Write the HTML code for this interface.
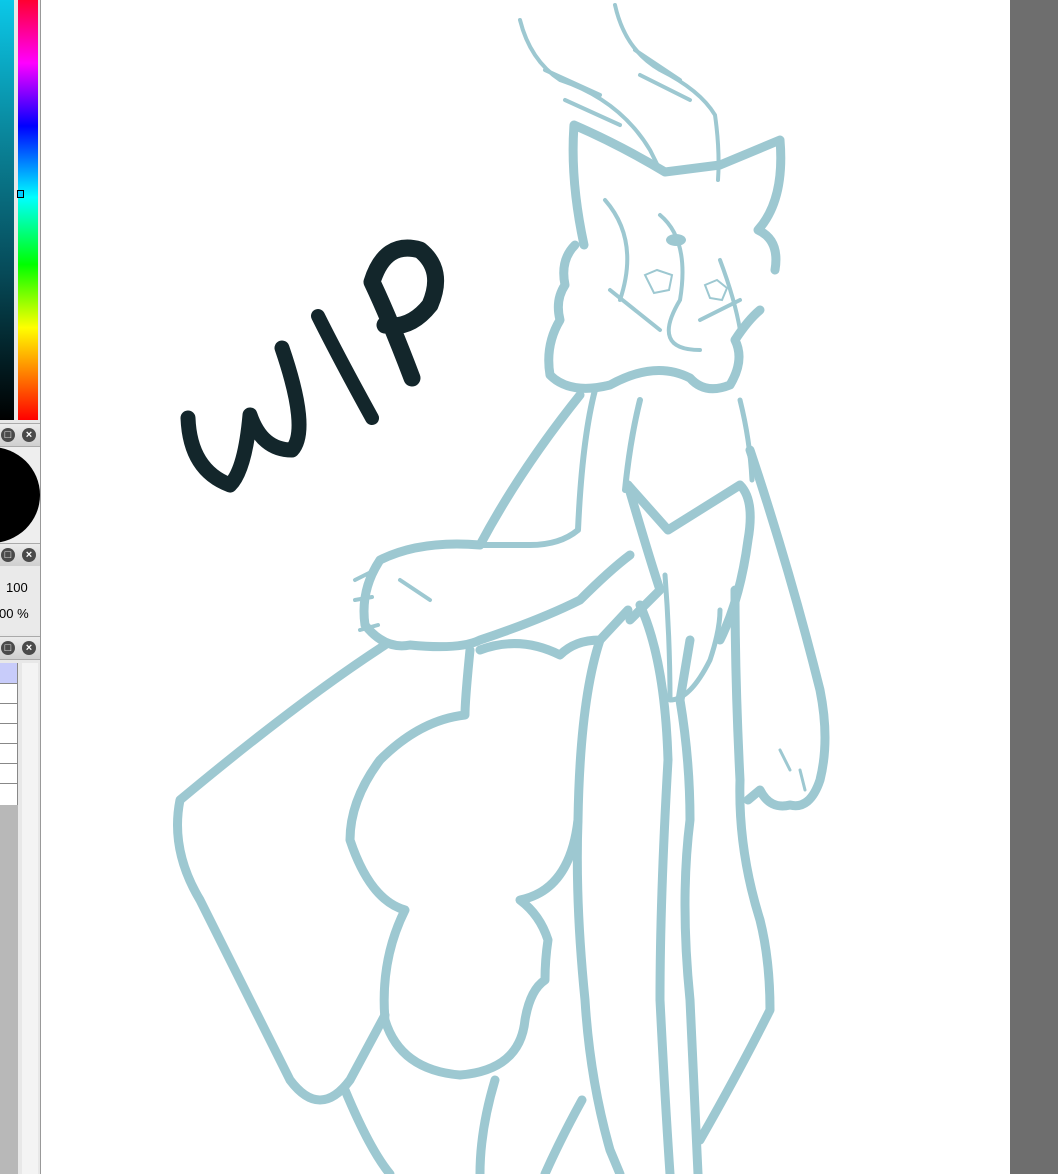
<!DOCTYPE html>
<html><head><style>
html,body{margin:0;padding:0;width:1058px;height:1174px;overflow:hidden;background:#fff;font-family:"Liberation Sans",sans-serif}
.p{position:absolute}
.hdr{position:absolute;left:0;width:40px;height:22px;background:linear-gradient(#ececec,#cfcfcf);border-top:1px solid #aaa;border-bottom:1px solid #aaa}
.ic{position:absolute;top:4px;width:14px;height:14px;border-radius:50%;background:#4a4a4a;color:#fff;font-size:11px;line-height:14px;text-align:center;font-weight:bold}
</style></head><body>
<div class="p" style="left:0;top:0;width:40px;height:1174px;background:#e8e8e8;border-right:1px solid #999"></div>
<div class="p" style="left:0;top:0;width:14px;height:420px;background:linear-gradient(#0bc8e8,#0a8aa0 30%,#064a58 65%,#000)"></div>
<div class="p" style="left:18px;top:0;width:20px;height:420px;background:linear-gradient(#ff0030,#ff00ff 15%,#0000ff 30%,#00ffff 47%,#00ff00 63%,#ffff00 78%,#ff0000)"></div>
<div class="p" style="left:17px;top:190px;width:5px;height:6px;border:1px solid #000;background:#0cf"></div>
<div class="hdr" style="top:423px"><div class="ic" style="left:1px">□</div><div class="ic" style="left:22px">×</div></div>
<div class="p" style="left:0;top:447px;width:40px;height:96px;background:#eee;overflow:hidden"><div style="position:absolute;left:-58px;top:0;width:98px;height:96px;border-radius:50%;background:#000"></div></div>
<div class="hdr" style="top:543px"><div class="ic" style="left:1px">□</div><div class="ic" style="left:22px">×</div></div>
<div class="p" style="left:0;top:566px;width:40px;height:68px;background:#eaeaea;font-size:13px">
<div class="p" style="left:6px;top:14px">100</div><div class="p" style="left:-1px;top:40px">00 %</div></div>
<div class="hdr" style="top:636px"><div class="ic" style="left:1px">□</div><div class="ic" style="left:22px">×</div></div>
<div class="p" style="left:0;top:663px;width:17px;height:142px;background:#fff;border-right:1px solid #888">
<div style="height:20px;background:#c8ccfa;border-bottom:1px solid #888"></div>
<div style="height:19px;border-bottom:1px solid #888"></div><div style="height:19px;border-bottom:1px solid #888"></div><div style="height:19px;border-bottom:1px solid #888"></div><div style="height:19px;border-bottom:1px solid #888"></div><div style="height:19px;border-bottom:1px solid #888"></div></div>
<div class="p" style="left:0;top:805px;width:18px;height:369px;background:#b8b8b8"></div>
<div class="p" style="left:22px;top:663px;width:16px;height:511px;background:#f4f4f4"></div>
<div class="p" style="left:1010px;top:0;width:48px;height:1174px;background:#6e6e6e"></div>
<svg class="p" style="left:0;top:0" width="1010" height="1174" viewBox="0 0 1010 1174">
<g fill="none" stroke="#13262b" stroke-linecap="round" stroke-linejoin="round">
<path d="M188 418 Q190 470 230 485 Q245 470 250 415 Q262 450 292 450 Q310 430 282 348" stroke-width="15"/>
<path d="M318 316 Q340 360 372 418" stroke-width="14"/>
<path d="M412 378 Q390 320 372 282 Q385 240 420 250 Q445 270 430 305 Q410 330 385 325" stroke-width="17"/>
</g>
<g fill="none" stroke="#9dc8d1" stroke-linecap="round" stroke-linejoin="round" stroke-width="9">
<path d="M584 245 Q570 180 574 125 Q620 145 665 172 L720 165 L780 140 Q785 200 758 230 Q780 240 775 270"/>
<path d="M575 245 Q560 260 565 285 Q555 300 560 320 Q545 345 550 375 Q570 395 610 385 Q655 360 690 378 Q705 395 730 385 Q745 360 735 340 Q748 320 760 310"/>
<path d="M580 395 Q520 470 480 545 Q420 540 380 560 Q360 590 365 625 Q385 650 410 645 Q460 650 480 640 Q540 620 580 600 Q610 570 630 555"/>
<path d="M385 645 Q300 700 180 800 Q170 850 200 900 Q260 1020 290 1080 Q320 1120 350 1080 L385 1015"/>
<path d="M470 650 Q465 700 465 715 Q420 720 380 760 Q350 800 350 840 Q370 900 405 910 Q380 960 385 1020 Q400 1070 460 1075 Q520 1070 525 1020 Q530 990 545 980 Q545 960 548 940 Q540 915 520 900 Q570 890 578 820"/>
<path d="M480 650 Q520 635 560 655 Q575 640 600 640 L628 610"/>
<path d="M345 1090 Q370 1150 390 1174"/>
<path d="M495 1080 Q480 1130 480 1174"/>
<path d="M582 1100 Q560 1140 545 1174"/>
<path d="M628 485 L668 530 L740 485 Q755 500 748 540 Q740 600 720 640"/>
<path d="M628 485 Q650 560 660 590 Q640 610 630 620"/>
<path d="M600 640 Q580 700 578 820 Q575 900 585 1000 Q590 1080 610 1150 L620 1174"/>
<path d="M640 605 Q665 660 668 760 Q660 900 660 1000 Q665 1100 670 1174"/>
<path d="M690 640 L680 700 Q690 760 690 820 Q680 900 690 1000 L698 1174"/>
<path d="M735 590 Q735 680 740 780 Q738 850 760 920 Q770 960 770 1010 Q740 1070 700 1140"/>
<path d="M750 450 Q790 570 820 690 Q830 740 820 780 Q810 810 790 805 Q770 810 760 790 L748 800"/>
<path d="M595 390 Q582 440 578 530 Q560 545 530 545 L480 545" stroke-width="6"/>
<path d="M640 400 Q630 440 625 490" stroke-width="6"/>
<path d="M740 400 Q750 440 752 480" stroke-width="5"/>
<path d="M665 575 Q670 640 670 700 Q690 700 710 660 Q720 630 720 610" stroke-width="5"/>
</g>
<g fill="none" stroke="#9dc8d1" stroke-linecap="round" stroke-width="4">
<path d="M520 20 Q530 60 560 80 Q620 100 650 150 L660 170"/>
<path d="M615 5 Q625 50 660 70 Q700 90 715 115 Q720 150 718 180"/>
<path d="M545 70 L600 95 M565 100 L620 125 M635 50 L680 80 M640 75 L690 100"/>
<path d="M605 200 Q640 240 620 300 M660 215 Q690 240 680 300 Q650 350 700 350"/>
<path d="M610 290 L660 330 M700 320 L740 300 M720 260 Q735 300 740 330"/>
<path d="M645 275 l12 -5 l15 5 l-3 15 l-15 3 z M705 285 l12 -5 l10 8 l-5 12 l-12 -2 z" stroke-width="2"/>
<path d="M355 580 L375 570 M355 600 L372 597 M360 630 L378 625 M400 580 Q415 590 430 600" stroke-width="4"/>
<path d="M780 750 L790 770 M800 770 L805 790" stroke-width="3"/>
</g>
<ellipse cx="676" cy="240" rx="10" ry="6" fill="#9dc8d1"/>
</svg>
</body></html>
